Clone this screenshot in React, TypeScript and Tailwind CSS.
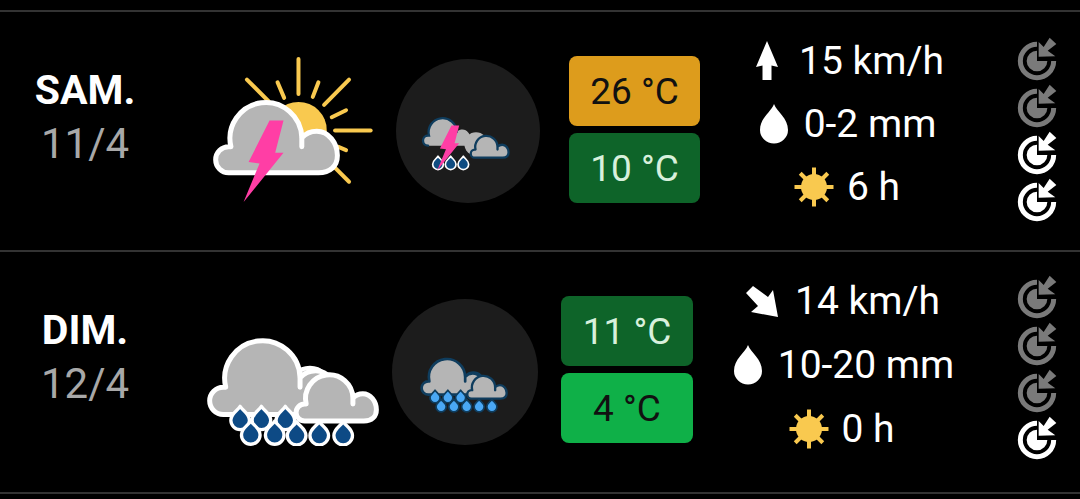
import React from "react";

const CLOUD_FILL = "M85 400 A39 39 0 0 1 85 322 H92 A108 108 0 1 1 305 295 C320 278 335 275 350 275 C385 275 412 310 412 348 C412 380 390 400 355 400 Z";
const CLOUD_LINE = "M85 400 A39 39 0 0 1 85 322 H92 A108 108 0 1 1 305 295 V322 M305 295 C320 278 335 275 350 275 C385 275 412 310 412 348 C412 380 390 400 355 400 H85";

function Cloud({ tx, ty, s, stroke, w }: { tx: number; ty: number; s: number; stroke: string; w: number }) {
  return (
    <g transform={`translate(${tx} ${ty}) scale(${s})`}>
      <path d={CLOUD_FILL} fill="#b5b5b5" />
      <path d={CLOUD_LINE} fill="none" stroke={stroke} strokeWidth={w / s} strokeLinecap="round" strokeLinejoin="round" />
    </g>
  );
}

function Drop({ x, y, r, fill, stroke, w }: { x: number; y: number; r: number; fill: string; stroke: string; w: number }) {
  const s = r / 24;
  return (
    <path
      transform={`translate(${x} ${y}) scale(${s})`}
      d="M0 -32 C7 -20 24 -14 24 4 A24 24 0 0 1 -24 4 C-24 -14 -7 -20 0 -32 Z"
      fill={fill}
      stroke={stroke}
      strokeWidth={w / s}
      strokeLinejoin="round"
    />
  );
}

const BOLT = "208,243 250,243 225,340 250,340 130,488 178,372 145,368";
const RAYS = [
  [295, 58, 295, 163],
  [140, 120, 205, 185],
  [232, 128, 252, 175],
  [355, 128, 338, 172],
  [447, 120, 372, 196],
  [438, 212, 395, 233],
  [405, 273, 512, 273],
  [415, 322, 438, 332],
  [400, 380, 447, 427],
];

function StormLarge() {
  return (
    <svg viewBox="0 40 530 460" className="w-[177px] h-[153px]">
      {RAYS.map((r, i) => (
        <line key={i} x1={r[0]} y1={r[1]} x2={r[2]} y2={r[3]} stroke="#f9c94f" strokeWidth="12" strokeLinecap="round" />
      ))}
      <circle cx="295" cy="272" r="85" fill="#f9c94f" />
      <Cloud tx={0} ty={0} s={1} stroke="#ffffff" w={15} />
      <polygon points={BOLT} fill="#ff3ea5" />
    </svg>
  );
}

function StormSmall() {
  return (
    <svg viewBox="590 55 432 432" className="w-full h-full">
      <circle cx="830" cy="310" r="35" fill="#b5b5b5" />
      <Cloud tx={800} ty={227} s={0.31} stroke="#0f3d5e" w={7} />
      <Cloud tx={653} ty={159} s={0.39} stroke="#0f3d5e" w={0} />
      <path
        transform="translate(653 159) scale(0.39)"
        d="M85 400 A39 39 0 0 1 85 322 H92 A108 108 0 1 1 305 295"
        fill="none"
        stroke="#0f3d5e"
        strokeWidth="18"
        strokeLinecap="round"
      />
      {[716, 754, 792].map((x) => (
        <Drop key={x} x={x} y={368} r={16} fill="#0f4c81" stroke="#ffffff" w={5} />
      ))}
      <polygon transform="translate(642 121) scale(0.55)" points={BOLT} fill="#ff3ea5" />
    </svg>
  );
}

function RainLarge() {
  const drops = [
    [120, 388], [184, 388], [256, 388],
    [152, 432], [224, 432], [290, 434], [358, 434], [430, 434],
  ];
  return (
    <svg viewBox="0 130 540 340" className="w-[180px] h-[113px]">
      <circle cx="330" cy="295" r="60" fill="#b5b5b5" stroke="#ffffff" strokeWidth="13" />
      <Cloud tx={-20} ty={-45} s={1.05} stroke="#ffffff" w={15} />
      <Cloud tx={258} ty={131} s={0.66} stroke="#ffffff" w={15} />
      {drops.map(([x, y]) => (
        <Drop key={`${x}${y}`} x={x} y={y} r={28} fill="#0d4a85" stroke="#ffffff" w={10} />
      ))}
    </svg>
  );
}

function RainSmall() {
  const drops = [
    [704, 318], [742, 318], [780, 318],
    [722, 345], [760, 345], [798, 345], [835, 345], [873, 345],
  ];
  return (
    <svg viewBox="576 27 434 434" className="w-full h-full">
      <circle cx="818" cy="275" r="30" fill="#b5b5b5" stroke="#0f3d5e" strokeWidth="7" />
      <Cloud tx={641} ty={111} s={0.5} stroke="#0f3d5e" w={8} />
      <Cloud tx={785} ty={195} s={0.32} stroke="#0f3d5e" w={7} />
      {drops.map(([x, y]) => (
        <Drop key={`${x}${y}`} x={x} y={y} r={15} fill="#4aa8f5" stroke="#0f3d5e" w={5} />
      ))}
    </svg>
  );
}

function Target({ color }: { color: string }) {
  return (
    <svg viewBox="80 13 120 132" className="w-[40px] h-[44px]">
      <path d="M140 35 A50 50 0 1 0 190 85" fill="none" stroke={color} strokeWidth="15" />
      <path d="M140 54 A31 31 0 1 0 171 85 H140 Z" fill={color} />
      <polygon
        points="145,72 145,28 160,43 178,15 198,34 172,54 195,71"
        fill={color}
        stroke="#000"
        strokeWidth="4"
        paintOrder="stroke"
      />
    </svg>
  );
}

function ArrowUp() {
  return (
    <svg viewBox="0 0 22 40" className="w-[22px] h-[40px] shrink-0">
      <polygon points="11,0 22,26 15.5,24.5 15.5,39 6.5,39 6.5,24.5 0,26" fill="#ffffff" />
    </svg>
  );
}

function ArrowSE() {
  return (
    <svg viewBox="0 0 32 32" className="w-[32px] h-[32px] shrink-0">
      <polygon points="32,32 5,27 12,21 0,8 7,1 22,12 27,5" fill="#ffffff" />
    </svg>
  );
}

function DropIcon() {
  return (
    <svg viewBox="0 0 28 40" className="w-[28px] h-[40px] shrink-0">
      <path d="M14 0 C17 8 28 14 28 26 A14 13.5 0 0 1 0 26 C0 14 11 8 14 0 Z" fill="#ffffff" />
    </svg>
  );
}

function SunIcon() {
  const angles = [0, 45, 90, 135, 180, 225, 270, 315];
  return (
    <svg viewBox="-20 -20 40 40" className="w-[40px] h-[40px] shrink-0">
      {angles.map((a) => (
        <line key={a} x1="0" y1="0" x2="0" y2="-19.5" transform={`rotate(${a})`} stroke="#f9c94f" strokeWidth="4" />
      ))}
      <circle r="13" fill="#f9c94f" />
    </svg>
  );
}

function Temp({ value, cls }: { value: string; cls: string }) {
  return (
    <div className={`h-[70px] rounded-lg flex items-center justify-center text-[37px] leading-none ${cls}`}>{value}</div>
  );
}

function Stat({ icon, text, gap }: { icon: React.ReactNode; text: string; gap: string }) {
  return (
    <div className={`h-[40px] flex items-center justify-center text-white text-[39px] leading-none ${gap}`}>
      {icon}
      <span>{text}</span>
    </div>
  );
}

export default function App() {
  return (
    <div className="h-[499px] w-[1080px] bg-black overflow-hidden pt-[10px]" style={{ fontFamily: "Roboto, sans-serif" }}>
      {/* Saturday */}
      <div className="h-[240px] border-t-2 border-[#333333] flex">
        <div className="w-[170px] shrink-0 pt-[55px] text-center">
          <div className="text-white font-bold text-[41px] leading-[46px]">SAM.</div>
          <div className="text-[#a8a8a8] text-[42px] leading-[62px]">11/4</div>
        </div>
        <div className="w-[226px] shrink-0 pl-[30px] pt-[41px]">
          <StormLarge />
        </div>
        <div className="w-[144px] h-[144px] shrink-0 mt-[47px] rounded-full bg-[#1c1c1c]">
          <StormSmall />
        </div>
        <div className="w-[131px] shrink-0 ml-[29px] mt-[44px] flex flex-col gap-[7px]">
          <Temp value="26 °C" cls="bg-[#dd9c1c] text-[#111111]" />
          <Temp value="10 °C" cls="bg-[#0e6429] text-[#d8f0dc]" />
        </div>
        <div className="w-[300px] shrink-0 pt-[29px] flex flex-col gap-[23px]">
          <Stat icon={<ArrowUp />} text="15 km/h" gap="gap-[21px]" />
          <Stat icon={<DropIcon />} text="0-2 mm" gap="gap-[16px] pr-[4px]" />
          <Stat icon={<SunIcon />} text="6 h" gap="gap-[13px] pr-[6px]" />
        </div>
        <div className="ml-[17px] pt-[25px] flex flex-col gap-[3px]">
          <Target color="#7a7a7a" />
          <Target color="#7a7a7a" />
          <Target color="#ffffff" />
          <Target color="#ffffff" />
        </div>
      </div>
      {/* Sunday */}
      <div className="h-[240px] border-t-2 border-b-2 box-content border-[#333333] flex">
        <div className="w-[170px] shrink-0 pt-[55px] text-center">
          <div className="text-white font-bold text-[41px] leading-[46px]">DIM.</div>
          <div className="text-[#a8a8a8] text-[42px] leading-[62px]">12/4</div>
        </div>
        <div className="w-[222px] shrink-0 pl-[30px] pt-[81px]">
          <RainLarge />
        </div>
        <div className="w-[146px] h-[146px] shrink-0 mt-[47px] rounded-full bg-[#1c1c1c]">
          <RainSmall />
        </div>
        <div className="w-[132px] shrink-0 ml-[23px] mt-[44px] flex flex-col gap-[7px]">
          <Temp value="11 °C" cls="bg-[#0e6429] text-[#d8f0dc]" />
          <Temp value="4 °C" cls="bg-[#0fb048] text-[#111111]" />
        </div>
        <div className="w-[304px] shrink-0 pt-[29px] flex flex-col gap-[24px]">
          <Stat icon={<ArrowSE />} text="14 km/h" gap="gap-[17px] pr-[4px]" />
          <Stat icon={<DropIcon />} text="10-20 mm" gap="gap-[16px] pr-[2px]" />
          <Stat icon={<SunIcon />} text="0 h" gap="gap-[12px] pr-[6px]" />
        </div>
        <div className="ml-[20px] pt-[23px] flex flex-col gap-[3px]">
          <Target color="#7a7a7a" />
          <Target color="#7a7a7a" />
          <Target color="#7a7a7a" />
          <Target color="#ffffff" />
        </div>
      </div>
    </div>
  );
}
